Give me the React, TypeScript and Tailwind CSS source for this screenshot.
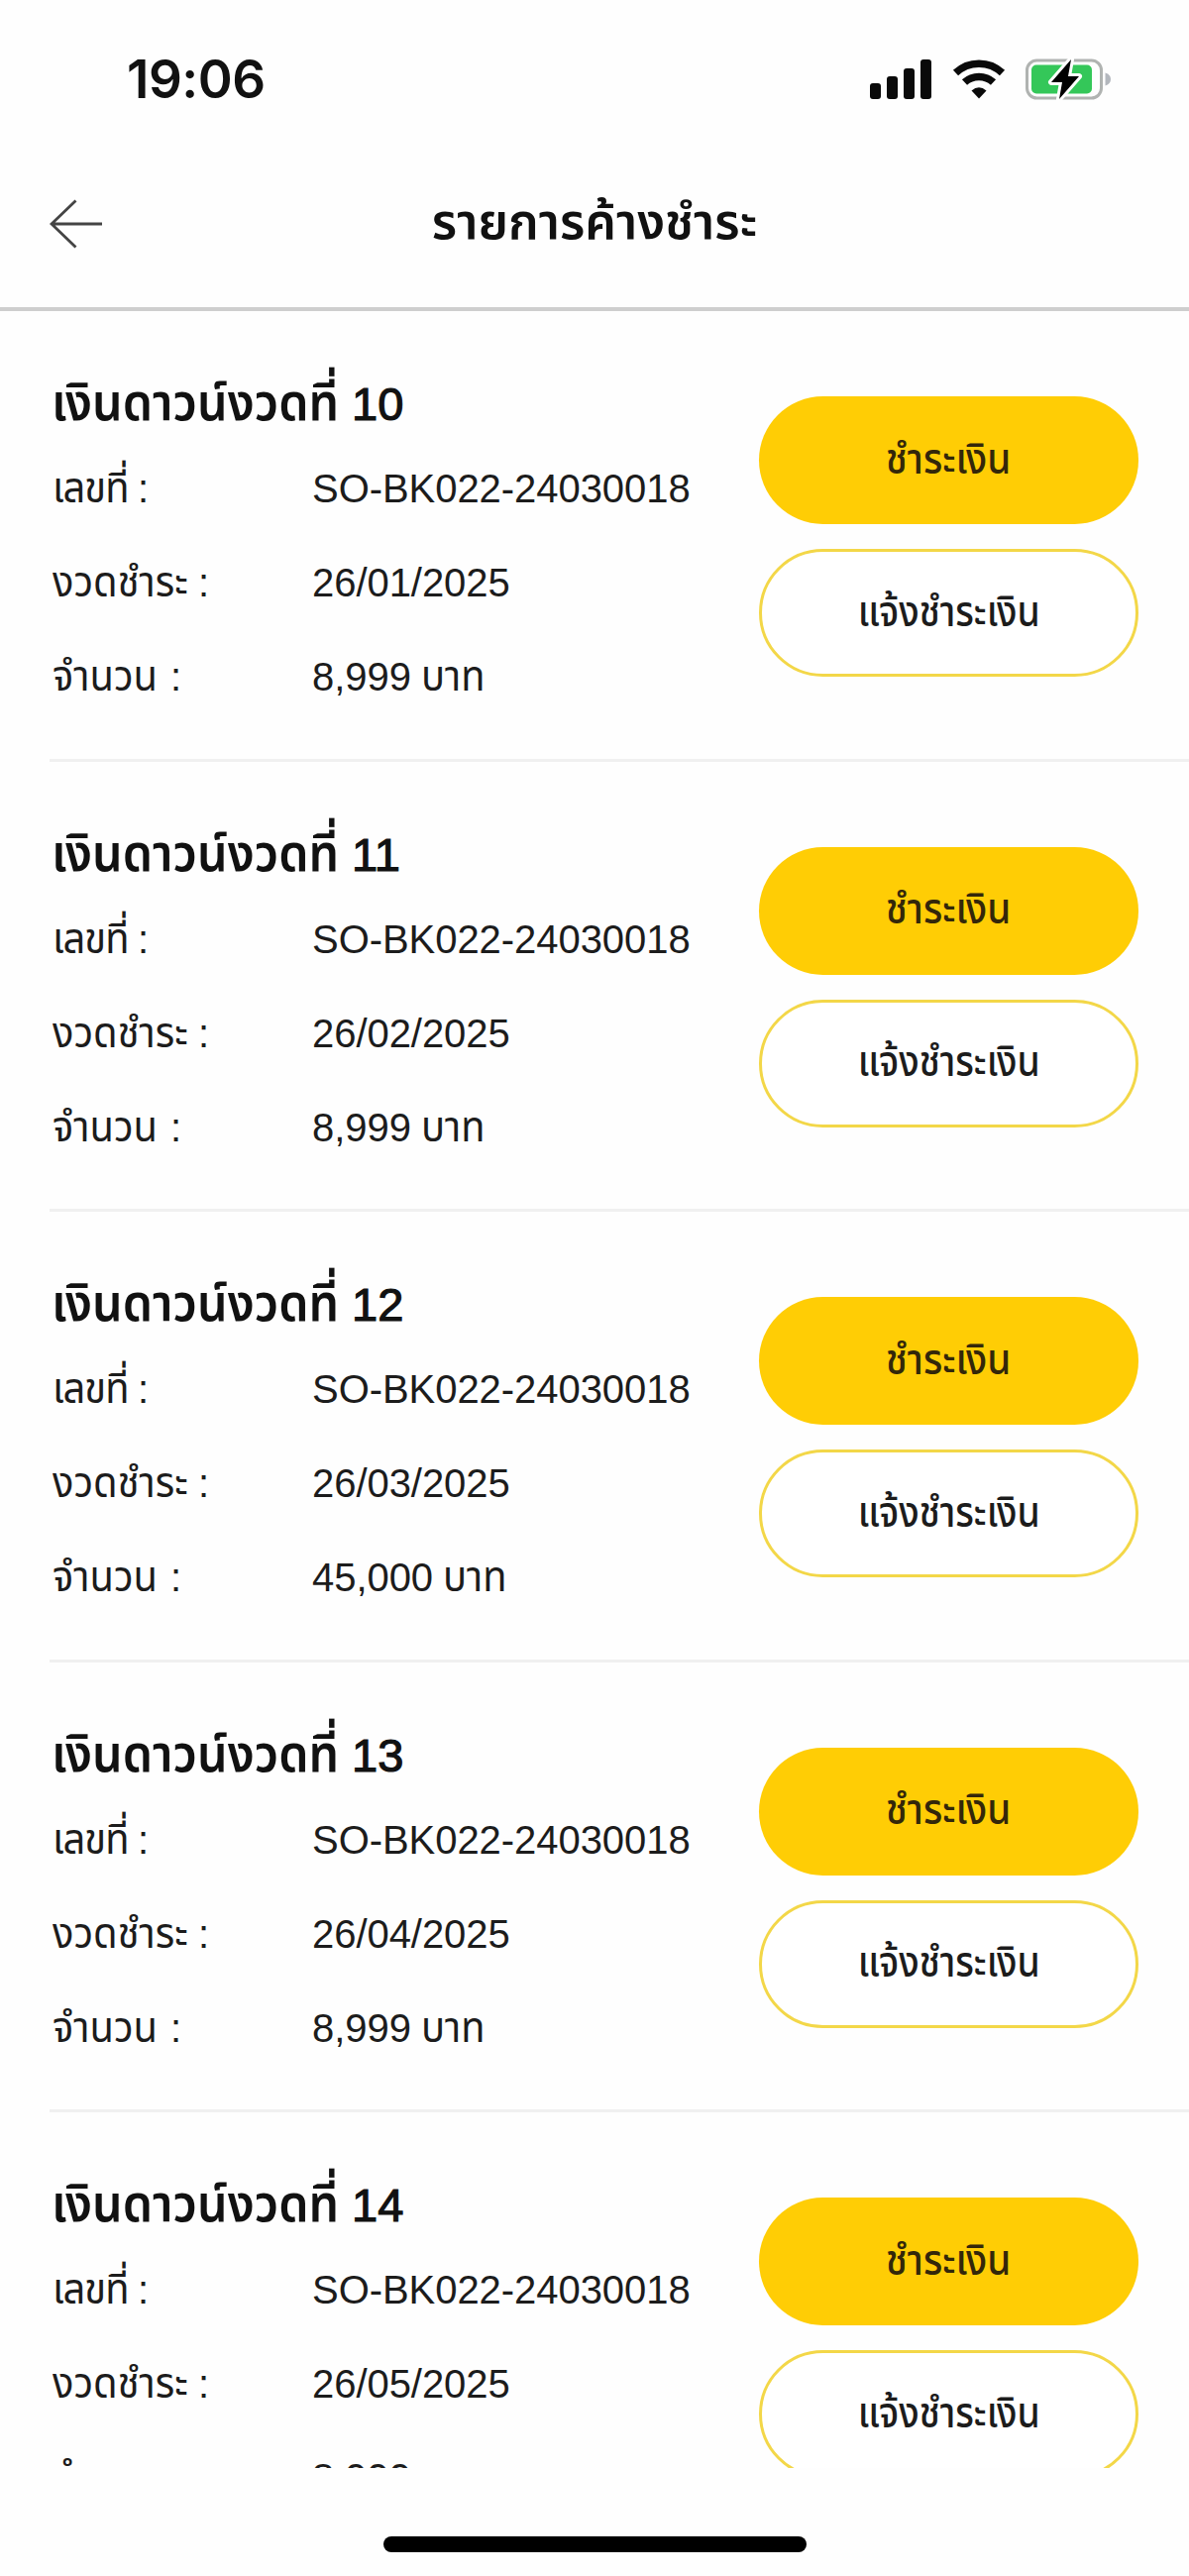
type Installment = { no: number; date: string; amount: string };

const installments: Installment[] = [
  { no: 10, date: '26/01/2025', amount: '8,999' },
  { no: 11, date: '26/02/2025', amount: '8,999' },
  { no: 12, date: '26/03/2025', amount: '45,000' },
  { no: 13, date: '26/04/2025', amount: '8,999' },
  { no: 14, date: '26/05/2025', amount: '8,999' },
];

const thai = "font-['Noto_Sans_Thai','Noto_Sans',sans-serif] leading-[0] whitespace-nowrap";

function StatusBar() {
  return (
    <div className="flex h-[160px] items-center justify-between pr-[78px] pl-[128px]">
      <span className="font-['Inter',sans-serif] text-[53px] leading-none font-semibold tracking-[-0.5px] text-[#111]">19:06</span>
      <div className="flex items-center">
        <svg width="62" height="40" viewBox="0 0 62 40" fill="#0a0a0a">
          <rect x="0" y="24" width="11" height="16" rx="3" />
          <rect x="17" y="17" width="11" height="23" rx="3" />
          <rect x="34" y="9" width="11" height="31" rx="3" />
          <rect x="51" y="0" width="11" height="40" rx="3" />
        </svg>
        <svg className="ml-[21px]" width="54" height="40" viewBox="0 0 54 40" fill="none" stroke="#0a0a0a">
          <path d="M3.5 13.5C16.5 1 37.5 1 50.5 13.5" strokeWidth="7.5" />
          <path d="M12.5 23C20.5 15.500 33.500 15.500 41.500 23" strokeWidth="7.500" />
          <path d="M19.500 31.500Q27 25 34.500 31.500L27 39.500Z" fill="#0a0a0a" stroke="none" />
        </svg>
        <svg className="ml-[20px]" width="87" height="42" viewBox="0 0 87 42" fill="none">
          <rect x="1.500" y="2" width="75" height="38" rx="10" stroke="#b0b3b1" strokeWidth="3" />
          <path d="M80.500 14.500C84 15.500 86 18 86 21C86 24 84 26.500 80.500 27.500Z" fill="#b3b7bd" />
          <rect x="6" y="6.500" width="61" height="29" rx="5" fill="#34c759" />
          <path d="M46 1L26 24H37L34 41L54 18H43Z" fill="#000" stroke="#fff" strokeWidth="6" strokeLinejoin="round" paintOrder="stroke" />
        </svg>
      </div>
    </div>
  );
}

function Header() {
  return (
    <header className="flex h-[154px] items-center border-b-4 border-[#cecece] px-[50px] pb-[18px]">
      <svg width="54" height="50" viewBox="0 0 54 50" fill="none" stroke="#444" strokeWidth="2.800">
        <path d="M53 25H2M26.500 1.500L2 25L26.500 48.500" />
      </svg>
      <h1 className={`${thai} ml-[-54px] flex-1 text-center text-[50px] font-semibold text-[#111]`}>รายการค้างชำระ</h1>
    </header>
  );
}

type RowProps = { label: string; labelWidth: string; value: string; unit?: string };

function Row({ label, labelWidth, value, unit }: RowProps) {
  return (
    <div className="flex h-[95px] items-baseline text-[40px] text-[#1c1c1c]">
      <div className="flex w-[262px] items-baseline">
        <span className={labelWidth}>
          <span className={`${thai} inline-block origin-left scale-x-[.95] text-[42px]`}>{label}</span>
        </span>
        <span className="leading-[0]">:</span>
      </div>
      <span className="leading-[95px] tracking-[-0.05px]">{value}</span>
      {unit && <span className={`${thai} ml-[10px] origin-left scale-x-[.95] text-[42px]`}>{unit}</span>}
    </div>
  );
}

function Item({ no, date, amount }: Installment) {
  return (
    <section className="ml-[50px] flex h-[454.500px] shrink-0 border-b-[3px] border-[#f0f0f0] pl-[3px]">
      <div className="w-[713px] pt-[56px]">
        <h2 className="flex h-[76px] items-baseline text-[47px] text-[#111]">
          <span className="w-[302px] leading-[0]">
            <span className={`${thai} ml-[-1.5px] inline-block origin-left scale-x-[.93] text-[52px] font-semibold`}>เงินดาวน์งวดที่</span>
          </span>
          <span className="leading-[76px] [-webkit-text-stroke:1.2px_#111]">{no}</span>
        </h2>
        <Row label="เลขที่" labelWidth="w-[86px] leading-[0] tracking-[-1px]" value="SO-BK022-24030018" />
        <Row label="งวดชำระ" labelWidth="w-[147px] leading-[0]" value={date} />
        <Row label="จำนวน" labelWidth="w-[119px] leading-[0]" value={amount} unit="บาท" />
      </div>
      <div className="flex w-[383px] flex-col gap-[25px] pt-[86px]">
        <button className="flex h-[129px] items-center justify-center rounded-full bg-[#ffcd05] text-[#33270a]">
          <span className={`${thai} scale-x-[.9] text-[43px] font-medium`}>ชำระเงิน</span>
        </button>
        <button className="flex h-[129px] items-center justify-center rounded-full border-[3px] border-[#f3d748] bg-white text-[#1c1c1c]">
          <span className={`${thai} scale-x-[.87] text-[43px] font-medium`}>แจ้งชำระเงิน</span>
        </button>
      </div>
    </section>
  );
}

export default function App() {
  return (
    <main className="flex h-[2600px] w-[1200px] flex-col overflow-hidden bg-[#fefefe] font-['Liberation_Sans',Arial,sans-serif]">
      <StatusBar />
      <Header />
      <div className="flex h-[2177px] flex-col overflow-hidden">
        {installments.map((it) => (
          <Item key={it.no} {...it} />
        ))}
      </div>
      <div className="mx-auto mt-[69px] h-[16px] w-[427px] rounded-full bg-black" />
    </main>
  );
}
